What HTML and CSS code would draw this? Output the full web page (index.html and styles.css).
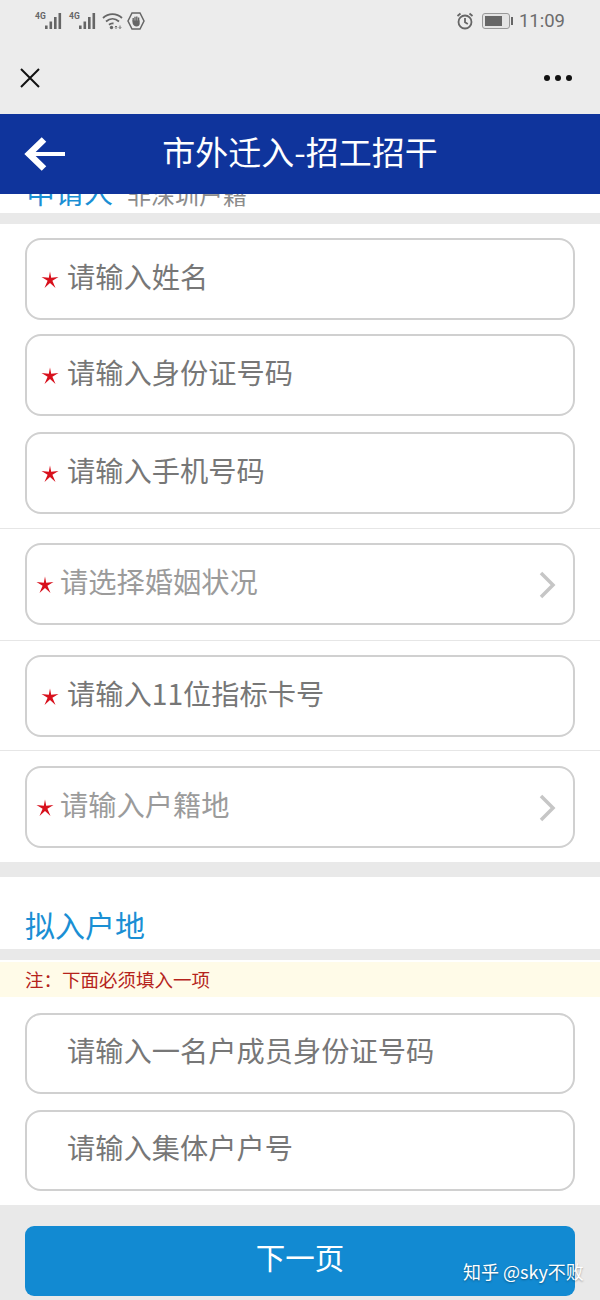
FILE: index.html
```html
<!DOCTYPE html>
<html lang="zh-CN">
  <head>
    <meta charset="UTF-8" />
    <meta name="viewport" content="width=device-width, initial-scale=1.0" />
    <title>市外迁入-招工招干</title>
    <link rel="stylesheet" href="styles.css">
  </head>
  <body>
    <svg class="defs" width="0" height="0">
      <symbol id="star" viewBox="0 0 18 18">
        <path d="M9 0.500 10.200 6.800 17.500 6 11.400 9.800 14.500 17 9 12 3.500 17 6.600 9.800 0.500 6 7.800 6.800Z" />
      </symbol>
      <symbol id="bars" viewBox="0 0 30 18">
        <rect x="11" y="13.500" width="2.600" height="3.500" />
        <rect x="15.500" y="9.500" width="2.600" height="7.500" />
        <rect x="20" y="5" width="2.600" height="12" />
        <rect x="24.500" y="1" width="2.600" height="16" />
      </symbol>
      <symbol id="arrow" viewBox="0 0 18 30">
        <path d="M3 3 15 15 3 27" />
      </symbol>
    </svg>

    <div class="status">
      <div class="status-left">
        <svg class="signal" viewBox="0 0 30 18"><text x="1" y="7" class="net">4G</text><use href="#bars" width="30" height="18" /></svg>
        <svg class="signal" viewBox="0 0 30 18"><text x="1" y="7" class="net">4G</text><use href="#bars" width="30" height="18" /></svg>
        <svg class="wifi" viewBox="0 0 22 18">
          <path d="M1 6C6.500 0.800 14.500 0.800 20 6M4 9.500C8 6 13 6 17 9.500M7 12.800C8.500 11.500 10 11.200 11.500 11.500" />
          <circle cx="9.500" cy="15.500" r="1.700" />
          <path class="wifi-arrows" d="M14 17V14L12.800 15.200M14 14 15.200 15.200M18 13.500V16.500L16.800 15.300M18 16.500 19.200 15.300" />
        </svg>
        <svg class="shield" viewBox="0 0 18 18">
          <path class="shield-line" d="M5 1H13L17 9 13 17H5L1 9Z" />
          <path class="shield-hand" d="M6.200 9V6M8 9V4.800M9.800 9V4.500M11.600 9V5.500" />
          <path d="M5.200 8.500H12.700V11.500C12.700 13.500 11.500 14.500 9.500 14.500 7.500 14.500 6.700 13.500 5.800 12Z" />
        </svg>
      </div>
      <div class="status-right">
        <svg class="alarm" viewBox="0 0 18 18">
          <circle cx="9" cy="10" r="6.500" />
          <path d="M9 6V10.300L11.800 12M1.500 4 4.500 1.500M16.500 4 13.500 1.500" />
        </svg>
        <div class="battery"><span class="battery-level"></span></div>
        <span class="battery-tip"></span>
        <span class="clock">11:09</span>
      </div>
    </div>

    <div class="nav">
      <svg class="close" viewBox="0 0 20 20"><path d="M1 1 19 19M19 1 1 19" /></svg>
      <div class="more"><span></span><span></span><span></span></div>
    </div>

    <header class="title-bar">
      <svg class="back" viewBox="0 0 42 36">
        <path class="back-shaft" d="M41 18H8" />
        <path class="back-head" d="M20 3.500 5 18 20 32.500" />
      </svg>
      <h1>市外迁入-招工招干</h1>
    </header>

    <div class="clipped">
      <div class="clipped-text"><span class="section-name">申请人</span><span class="section-sub">非深圳户籍</span></div>
    </div>
    <div class="band"></div>

    <div class="group group-top">
      <div class="field"><svg class="star"><use href="#star" /></svg>请输入姓名</div>
      <div class="field"><svg class="star"><use href="#star" /></svg>请输入身份证号码</div>
      <div class="field field-gap"><svg class="star"><use href="#star" /></svg>请输入手机号码</div>
    </div>
    <div class="group group-marriage">
      <div class="field field-select"><svg class="star"><use href="#star" /></svg>请选择婚姻状况<svg class="chevron"><use href="#arrow" /></svg></div>
    </div>
    <div class="group group-card">
      <div class="field"><svg class="star"><use href="#star" /></svg>请输入11位指标卡号</div>
    </div>
    <div class="group group-last">
      <div class="field field-select"><svg class="star"><use href="#star" /></svg>请输入户籍地<svg class="chevron"><use href="#arrow" /></svg></div>
    </div>

    <div class="band band-wide"></div>
    <div class="section-title">拟入户地</div>
    <div class="band"></div>
    <div class="notice">注：下面必须填入一项</div>

    <div class="group group-plain">
      <div class="field field-plain">请输入一名户成员身份证号码</div>
      <div class="field field-plain">请输入集体户户号</div>
    </div>

    <footer class="footer">
      <button class="next-btn">下一页</button>
    </footer>

    <div class="watermark">知乎 @sky不败</div>
  </body>
</html>
```

FILE: styles.css
```css
* {
  margin: 0;
  padding: 0;
  box-sizing: border-box;
}
html,
body {
  height: 1300px;
  overflow: hidden;
}
body {
  position: relative;
  background: #fff;
  font-family: "Noto Sans CJK SC", "Noto Sans", sans-serif;
  color: #777;
}
.defs {
  display: block;
  height: 0;
}
.net {
  font-family: "Roboto", sans-serif;
  font-size: 8.500px;
  font-weight: 700;
}

/* status bar */
.status {
  height: 42px;
  background: #ececec;
  display: flex;
  justify-content: space-between;
  align-items: center;
  padding: 0 35px 0 34px;
  color: #6c6c6c;
}
.status-left,
.status-right {
  display: flex;
  align-items: center;
}
.signal {
  width: 30px;
  height: 18px;
  margin-right: 4px;
  fill: #666;
}
.wifi {
  width: 22px;
  height: 18px;
  margin-right: 3px;
  fill: #666;
}
.wifi path {
  fill: none;
  stroke: #666;
  stroke-width: 1.800;
}
.wifi .wifi-arrows {
  stroke-width: 0.900;
}
.shield {
  width: 18px;
  height: 18px;
  fill: #666;
}
.shield-line {
  fill: none;
  stroke: #666;
  stroke-width: 1.500;
}
.shield-hand {
  fill: none;
  stroke: #666;
  stroke-width: 1.400;
}
.alarm {
  width: 18px;
  height: 18px;
  margin-right: 8px;
  fill: none;
  stroke: #666;
  stroke-width: 1.800;
}
.battery {
  width: 28px;
  height: 16px;
  border: 1px solid #999;
  border-radius: 3px;
  padding: 2px;
  background: #e4e4e4;
}
.battery-level {
  display: block;
  width: 17px;
  height: 100%;
  background: #666;
}
.battery-tip {
  width: 2px;
  height: 8px;
  margin-left: 1px;
  background: #666;
}
.clock {
  font-family: "Roboto", sans-serif;
  font-size: 18.500px;
  margin-left: 6px;
}

/* nav */
.nav {
  height: 72px;
  background: #ececec;
  display: flex;
  justify-content: space-between;
  align-items: center;
  padding: 0 28px 0 20px;
}
.close {
  width: 20px;
  height: 20px;
  fill: none;
  stroke: #111;
  stroke-width: 2;
}
.more {
  display: flex;
  gap: 5px;
}
.more span {
  width: 6px;
  height: 6px;
  border-radius: 50%;
  background: #111;
}

/* header */
.title-bar {
  height: 80px;
  background: #0f349c;
  display: flex;
  align-items: center;
  justify-content: center;
  padding-bottom: 5px;
  position: relative;
  color: #fff;
}
.title-bar h1 {
  font-size: 33px;
  font-weight: 400;
  line-height: 1;
}
.back {
  position: absolute;
  left: 24px;
  top: 22px;
  width: 42px;
  height: 36px;
  fill: none;
  stroke: #fff;
}
.back-shaft {
  stroke-width: 4;
}
.back-head {
  stroke-width: 6.500;
}
.clipped {
  height: 19px;
  overflow: hidden;
  display: flex;
  align-items: flex-end;
  padding-left: 26px;
}
.clipped-text {
  display: flex;
  align-items: baseline;
  line-height: 40px;
  margin-bottom: -1px;
  white-space: nowrap;
}
.section-name {
  color: #1a8fd4;
  font-size: 29px;
  margin-right: 14px;
}
.section-sub {
  color: #8c8c8c;
  font-size: 24px;
}
.band {
  height: 11px;
  background: #e9e9e9;
}
.band-wide {
  height: 15px;
}

/* form */
.group {
  padding: 14px 25px;
  border-bottom: 1px solid #e6e6e6;
}
.group-top {
  display: flex;
  flex-direction: column;
  gap: 14px;
}
.group-marriage {
  padding-bottom: 15px;
}
.group-card {
  padding-bottom: 13px;
}
.group-last {
  padding-top: 15px;
  border-bottom: 0;
}
.group-plain {
  padding: 16px 25px 14px;
  border-bottom: 0;
  display: flex;
  flex-direction: column;
  gap: 16px;
}
.field {
  height: 82px;
  border: 2px solid #d0d0d0;
  border-radius: 16px;
  display: flex;
  align-items: center;
  padding: 0 17px 7px 14px;
  font-size: 28.250px;
  color: #777;
  background: #fff;
}
.field-gap {
  margin-top: 2px;
}
.field-select {
  color: #9b9b9b;
  padding-left: 9px;
}
.field-select .star {
  margin-right: 6px;
}
.field-plain {
  height: 81px;
  padding-bottom: 8px;
  padding-left: 40px;
}
.star {
  width: 18px;
  height: 18px;
  margin: 8px 8px 0 0;
  flex: none;
  fill: #d8101c;
}
.chevron {
  width: 18px;
  height: 30px;
  margin: 9px 0 0 auto;
  fill: none;
  stroke: #c6c6c6;
  stroke-width: 3.500;
}

/* bottom part */
.section-title {
  height: 72px;
  padding: 27px 0 0 25px;
  font-size: 30px;
  line-height: 40px;
  color: #1a8fd4;
}
.notice {
  height: 35px;
  margin-top: 2px;
  background: #fffbe8;
  color: #b5231c;
  font-size: 18.500px;
  line-height: 35px;
  padding-left: 25px;
}
.footer {
  background: #e9e9e9;
  padding: 21px 25px 0;
  height: 95px;
}
.next-btn {
  display: block;
  width: 100%;
  height: 70px;
  border: 0;
  border-radius: 9px;
  background: #128ad2;
  color: #fff;
  font-family: inherit;
  font-size: 29.500px;
  padding-bottom: 11px;
}
.watermark {
  position: absolute;
  left: 463px;
  top: 1258px;
  font-size: 18px;
  line-height: 26px;
  color: #fff;
  text-shadow: 0 1px 2px rgba(0, 0, 0, 0.35);
  white-space: nowrap;
}
```
